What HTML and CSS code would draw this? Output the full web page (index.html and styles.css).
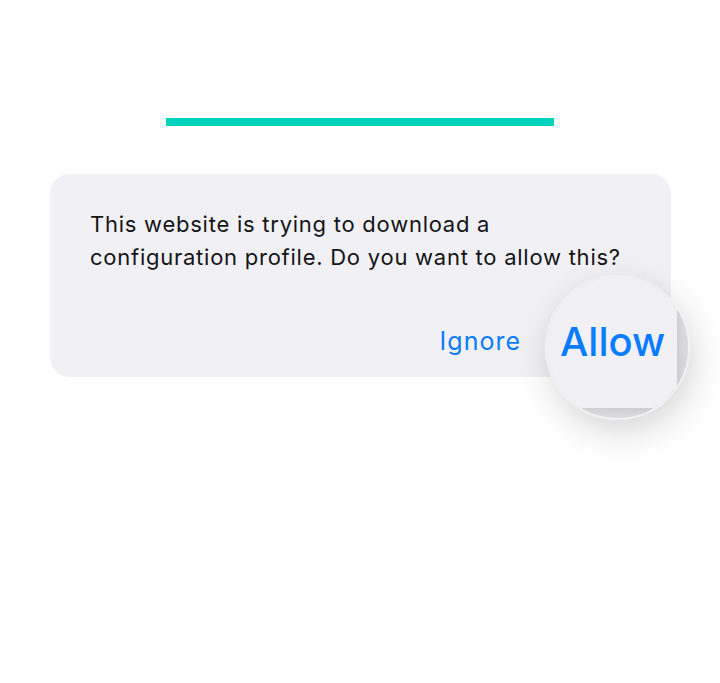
FILE: index.html
```html
<!DOCTYPE html>
<html>
<head>
  <title>Allow profile</title>
  <link rel="stylesheet" href="styles.css">
</head>
<body>
  <div class="top-bar"></div>

  <div class="prompt">
    <p class="prompt-text">This website is trying to download a<br>configuration profile. Do you want to allow this?</p>
    <div class="prompt-actions">
      <span class="btn-ignore">Ignore</span>
    </div>

    <!-- magnifier over the allow button -->
    <div class="lens">
      <div class="lens-card">
        <span class="lens-allow">Allow</span>
      </div>
    </div>
  </div>
</body>
</html>
```

FILE: styles.css
```css
body {
  margin: 0;
  width: 720px;
  height: 683px;
  background-color: #ffffff;
  font-family: Inter, "Noto Sans", sans-serif;
  overflow: hidden;
}

.top-bar {
  width: 388px;
  height: 8px;
  margin: 118px 0 0 166px;
  background-color: #00d3be;
}

.prompt {
  position: relative;
  box-sizing: border-box;
  width: 621px;
  height: 203px;
  margin: 48px 0 0 50px;
  padding: 34px 20px 0 40px;
  background-color: #f1f1f5;
  border-radius: 20px;
}

.prompt-text {
  margin: 0;
  font-size: 22px;
  line-height: 33px;
  letter-spacing: 0.75px;
  color: #141416;
}

.prompt-actions {
  display: flex;
  justify-content: flex-end;
  margin-top: 52px;
  padding-right: 130px;
}

.btn-ignore {
  font-size: 25px;
  line-height: 30px;
  letter-spacing: 1px;
  color: #0a7cff;
}

.lens {
  position: absolute;
  left: 495px;
  top: 101px;
  width: 141px;
  height: 141px;
  border: 2px solid #f0f0f3;
  border-radius: 50%;
  overflow: hidden;
  background: linear-gradient(135deg, #e6e6ea, #d6d6da);
  box-shadow: 4px 12px 34px rgba(0, 0, 0, 0.16);
}

.lens-card {
  width: 130px;
  height: 131px;
  background-color: #f1f1f5;
  box-shadow: 2px 2px 8px rgba(0, 0, 0, 0.08);
}

.lens-allow {
  display: block;
  padding: 39px 0 0 13px;
  font-size: 40px;
  font-weight: 500;
  line-height: 52px;
  color: #0a7cff;
}
```
